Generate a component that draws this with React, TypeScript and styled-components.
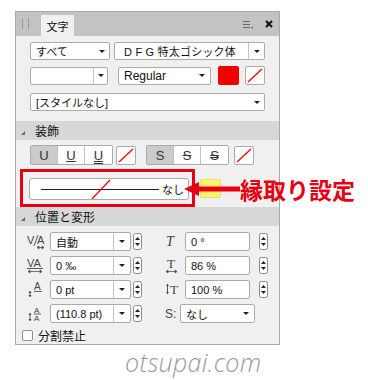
import styled, { createGlobalStyle } from 'styled-components';

const GlobalStyle = createGlobalStyle`
  body {
    margin: 0;
    background: #fff;
    font-family: "Liberation Sans", "Noto Sans CJK JP", sans-serif;
    color: #111;
  }
`;

const Page = styled.div`
  position: relative;
  width: 368px;
  height: 380px;
  padding: 11px 0 0 15px;
  box-sizing: border-box;
  background: #fff;
  overflow: hidden;
`;

const Panel = styled.div`
  width: 265px;
  height: 334px;
  box-sizing: border-box;
  border: 1px solid #a9a9a9;
  background: #f0f0f0;
  display: flex;
  flex-direction: column;
`;

const TitleBar = styled.div`
  height: 24px;
  flex-shrink: 0;
  background: #c3c3c3;
  display: flex;
  align-items: flex-end;
  padding: 0 6px 0 3px;
`;

const Grip = styled.div`
  width: 5px;
  height: 11px;
  margin: 0 10px 7px 3px;
  border-left: 1px solid #9a9a9a;
  border-right: 1px solid #9a9a9a;
`;

const Tab = styled.div`
  width: 33px;
  height: 21px;
  margin-left: 2px;
  background: #f0f0f0;
  font-size: 11px;
  display: flex;
  align-items: center;
  justify-content: center;
`;

const TitleTools = styled.div`
  margin-left: auto;
  height: 24px;
  display: flex;
  align-items: center;
  gap: 12px;
`;

const Section = styled.div<{ $pad?: string }>`
  display: flex;
  flex-direction: column;
  padding: ${(p) => p.$pad || '0 14px'};
`;

const Row = styled.div<{ $gap?: number; $mt?: number }>`
  display: flex;
  align-items: center;
  gap: ${(p) => p.$gap ?? 0}px;
  margin-top: ${(p) => p.$mt ?? 0}px;
`;

const Combo = styled.div<{ $w?: number; $h?: number }>`
  width: ${(p) => (p.$w ? `${p.$w}px` : '100%')};
  height: ${(p) => p.$h ?? 18}px;
  box-sizing: border-box;
  background: #fff;
  border: 1px solid #ababab;
  border-radius: 2px;
  display: flex;
  align-items: center;
  font-size: 11px;
  padding-left: 5px;
  flex-shrink: 0;
`;

const ComboText = styled.span`
  flex: 1;
  white-space: nowrap;
  overflow: hidden;
`;

const ArrowZone = styled.span<{ $sep?: boolean; $w?: number }>`
  width: ${(p) => p.$w ?? 14}px;
  align-self: stretch;
  display: flex;
  align-items: center;
  justify-content: center;
  border-left: ${(p) => (p.$sep ? '1px solid #c4c4c4' : 'none')};
  &::after {
    content: '';
    border-left: 3px solid transparent;
    border-right: 3px solid transparent;
    border-top: 3px solid #222;
  }
`;

const Swatch = styled.div<{ $color?: string; $w?: number; $h?: number }>`
  width: ${(p) => p.$w ?? 21}px;
  height: ${(p) => p.$h ?? 19}px;
  box-sizing: border-box;
  border-radius: 2px;
  background: ${(p) => p.$color || '#fff'};
  border: 1px solid ${(p) => (p.$color ? p.$color : '#ababab')};
  flex-shrink: 0;
  overflow: hidden;
`;

const SectionHead = styled.div<{ $mt?: number }>`
  height: 20px;
  margin-top: ${(p) => p.$mt ?? 0}px;
  background: #d7d7d7;
  display: flex;
  align-items: center;
  padding-left: 5px;
  font-size: 12px;
  gap: 10px;
`;

const Caret = styled.span`
  width: 0;
  height: 0;
  border-left: 4px solid transparent;
  border-bottom: 4px solid #6a6a6a;
  margin-top: 4px;
`;

const ToggleGroup = styled.div<{ $ml?: number }>`
  display: flex;
  margin-left: ${(p) => p.$ml ?? 0}px;
  border: 1px solid #ababab;
  border-radius: 2px;
  overflow: hidden;
`;

const Toggle = styled.div<{ $on?: boolean }>`
  width: 27px;
  height: 18px;
  box-sizing: border-box;
  background: ${(p) => (p.$on ? '#cbcbcb' : '#fff')};
  border-right: 1px solid #c2c2c2;
  display: flex;
  align-items: center;
  justify-content: center;
  font-size: 13px;
  color: #333;
  &:last-child {
    border-right: none;
  }
`;

const StrokeBox = styled.div`
  width: 175px;
  height: 38px;
  box-sizing: border-box;
  border: 3px solid #e60012;
  margin-left: 4px;
  padding: 6px 0 0 6px;
`;

const StrokeField = styled.div`
  width: 160px;
  height: 22px;
  box-sizing: border-box;
  background: #fff;
  border: 1px solid #ababab;
  border-radius: 3px;
  display: flex;
  align-items: center;
  padding: 0 4px 0 11px;
  gap: 3px;
  font-size: 11px;
  white-space: nowrap;
`;

const PosRow = styled.div<{ $mt?: number }>`
  display: flex;
  align-items: center;
  height: 19px;
  margin-top: ${(p) => p.$mt ?? 5}px;
  padding-left: 10px;
`;

const PosIcon = styled.div<{ $w: number; $ml?: number }>`
  width: ${(p) => p.$w}px;
  margin-left: ${(p) => p.$ml ?? 0}px;
  height: 19px;
  display: flex;
  align-items: center;
  flex-shrink: 0;
  font-size: 12px;
  color: #444;
`;

const Field = styled.div<{ $w: number }>`
  width: ${(p) => p.$w}px;
  height: 19px;
  box-sizing: border-box;
  background: #fff;
  border: 1px solid #ababab;
  border-radius: 2px;
  display: flex;
  align-items: center;
  padding-left: 5px;
  font-size: 11px;
  flex-shrink: 0;
`;

const SpinWrap = styled.div<{ $ml: number }>`
  margin-left: ${(p) => p.$ml}px;
  display: flex;
  align-items: center;
`;

const CheckRow = styled.div`
  display: flex;
  align-items: center;
  gap: 5px;
  margin-top: 4px;
  padding-left: 6px;
  font-size: 12px;
`;

const CheckBox = styled.span`
  width: 11px;
  height: 11px;
  box-sizing: border-box;
  background: #fff;
  border: 1px solid #8e8e8e;
  border-radius: 2px;
`;

const Watermark = styled.div`
  margin: 4px 0 0 110px;
  font-family: "Open Sans", "DejaVu Sans", sans-serif;
  font-style: italic;
  font-weight: 300;
  font-size: 25px;
  line-height: 26px;
  color: #9a9a9a;
  letter-spacing: 0.3px;
`;

const Callout = styled.div`
  position: absolute;
  left: 184px;
  top: 176px;
  display: flex;
  align-items: center;
`;

const CalloutText = styled.span`
  font-family: "Noto Sans CJK JP", sans-serif;
  font-weight: 700;
  font-size: 23px;
  line-height: 26px;
  color: #e60012;
  margin-left: 0;
`;

const Slash = ({ w, h }: { w: number; h: number }) => (
  <svg width={w} height={h} style={{ display: 'block' }}>
    <line x1={2} y1={h - 2} x2={w - 2} y2={2} stroke="#f00" strokeWidth={1.3} />
  </svg>
);

const Spinner = () => (
  <svg width="9" height="17" style={{ display: 'block' }}>
    <rect x="0.5" y="0.5" width="8" height="16" rx="2" fill="#fff" stroke="#8a8a8a" />
    <path d="M2 7 L4.5 4 L7 7 Z" fill="#222" />
    <path d="M2 10 L4.5 13 L7 10 Z" fill="#222" />
  </svg>
);

const SmallArrow = ({ x, y, w }: { x: number; y: number; w: number }) => (
  <g stroke="#555" strokeWidth={0.8} fill="#555">
    <line x1={x} y1={y} x2={x + w} y2={y} />
    <path d={`M${x} ${y} l2 -1.5 v3 z M${x + w} ${y} l-2 -1.5 v3 z`} />
  </g>
);

const KernIcon = () => (
  <svg width="20" height="17">
    <text x="1" y="11" fontSize="11" fontFamily="Liberation Sans" fill="#444">V</text>
    <text x="11" y="11" fontSize="11" fontFamily="Liberation Sans" fill="#444">A</text>
    <line x1="8" y1="13" x2="12" y2="2" stroke="#444" strokeWidth={0.9} />
    <SmallArrow x={11} y={14.5} w={7} />
  </svg>
);

const TrackIcon = () => (
  <svg width="20" height="17">
    <text x="1" y="10" fontSize="11" fontFamily="Liberation Sans" fill="#444">VA</text>
    <line x1="1" y1="11.5" x2="17" y2="11.5" stroke="#444" strokeWidth={0.9} />
    <SmallArrow x={2} y={14.5} w={14} />
  </svg>
);

const ShiftIcon = () => (
  <svg width="20" height="17">
    <text x="8" y="9" fontSize="10" fontFamily="Liberation Sans" fill="#444">A</text>
    <line x1="8" y1="10.5" x2="16" y2="10.5" stroke="#444" strokeWidth={0.8} />
    <line x1="4" y1="10" x2="4" y2="16" stroke="#444" strokeWidth={0.8} />
    <path d="M4 10 l-1.5 2 h3 z M4 16 l-1.5 -2 h3 z" fill="#444" />
  </svg>
);

const LeadIcon = () => (
  <svg width="20" height="17">
    <text x="8" y="8" fontSize="8" fontFamily="Liberation Sans" fill="#444">A</text>
    <line x1="8" y1="9" x2="15" y2="9" stroke="#444" strokeWidth={0.8} />
    <text x="8" y="16" fontSize="8" fontFamily="Liberation Sans" fill="#444">A</text>
    <line x1="4" y1="8" x2="4" y2="16" stroke="#444" strokeWidth={0.8} />
    <path d="M4 8 l-1.5 2 h3 z M4 16 l-1.5 -2 h3 z" fill="#444" />
  </svg>
);

const SkewIcon = () => (
  <svg width="16" height="17">
    <text x="1" y="13" fontSize="14" fontFamily="Liberation Serif" fontStyle="italic" fill="#444">T</text>
  </svg>
);

const HScaleIcon = () => (
  <svg width="16" height="17">
    <text x="2" y="11" fontSize="13" fontFamily="Liberation Serif" fill="#444">T</text>
    <SmallArrow x={1} y={14.5} w={11} />
  </svg>
);

const VScaleIcon = () => (
  <svg width="18" height="17">
    <line x1="2.5" y1="3" x2="2.5" y2="13" stroke="#444" strokeWidth={0.9} />
    <path d="M2.5 3 l-1.5 2 h3 z M2.5 13 l-1.5 -2 h3 z" fill="#444" />
    <text x="5" y="13" fontSize="13" fontFamily="Liberation Serif" fill="#444">T</text>
  </svg>
);

const MenuIcon = () => (
  <svg width="10" height="9">
    <g stroke="#666" strokeWidth={1}>
      <line x1="0" y1="1.5" x2="7" y2="1.5" />
      <line x1="0" y1="4.5" x2="7" y2="4.5" />
      <line x1="0" y1="7.5" x2="7" y2="7.5" />
    </g>
    <rect x="8.5" y="7" width="1.5" height="1.5" fill="#666" />
  </svg>
);

const CloseIcon = () => (
  <svg width="8" height="8">
    <g stroke="#111" strokeWidth={2}>
      <line x1="1" y1="1" x2="7" y2="7" />
      <line x1="7" y1="1" x2="1" y2="7" />
    </g>
  </svg>
);

const CalloutArrow = () => (
  <svg width="56" height="16">
    <path d="M0 8 L15 1 L15 5.5 L56 5.5 L56 10.5 L15 10.5 L15 15 Z" fill="#e60012" />
  </svg>
);

const positionRows = [
  { left: <KernIcon />, value: '自動', right: <SkewIcon />, rvalue: '0 °' },
  { left: <TrackIcon />, value: '0 ‰', right: <HScaleIcon />, rvalue: '86 %' },
  { left: <ShiftIcon />, value: '0 pt', right: <VScaleIcon />, rvalue: '100 %' },
];

export default function App() {
  return (
    <>
      <GlobalStyle />
      <Page>
        <Panel>
          <TitleBar>
            <Grip />
            <Tab>文字</Tab>
            <TitleTools>
              <MenuIcon />
              <CloseIcon />
            </TitleTools>
          </TitleBar>

          <Section $pad="6px 14px 0">
            <Row $gap={4}>
              <Combo $w={80}>
                <ComboText>すべて</ComboText>
                <ArrowZone $w={15} />
              </Combo>
              <Combo $w={151} style={{ paddingLeft: 9 }}>
                <ComboText style={{ letterSpacing: 0.2 }}>D F G 特太ゴシック体</ComboText>
                <ArrowZone $sep $w={15} />
              </Combo>
            </Row>
            <Row $mt={6}>
              <Combo $w={78}>
                <ComboText />
                <ArrowZone $sep $w={13} />
              </Combo>
              <Combo $w={93} style={{ marginLeft: 10 }}>
                <ComboText style={{ fontSize: 12 }}>Regular</ComboText>
                <ArrowZone $w={16} />
              </Combo>
              <Swatch $color="#f20000" style={{ marginLeft: 7 }} />
              <Swatch $w={20} style={{ marginLeft: 6 }}>
                <Slash w={18} h={17} />
              </Swatch>
            </Row>
            <Row $mt={8}>
              <Combo>
                <ComboText>[スタイルなし]</ComboText>
                <ArrowZone $w={15} />
              </Combo>
            </Row>
          </Section>

          <SectionHead $mt={10}>
            <Caret />
            装飾
          </SectionHead>

          <Section $pad="5px 14px 0">
            <Row>
              <ToggleGroup>
                <Toggle $on>U</Toggle>
                <Toggle style={{ textDecoration: 'underline' }}>U</Toggle>
                <Toggle style={{ textDecoration: 'underline double' }}>U</Toggle>
              </ToggleGroup>
              <Swatch $w={20} style={{ marginLeft: 3 }}>
                <Slash w={18} h={17} />
              </Swatch>
              <ToggleGroup $ml={10}>
                <Toggle $on>S</Toggle>
                <Toggle style={{ textDecoration: 'line-through' }}>S</Toggle>
                <Toggle style={{ textDecoration: 'line-through double' }}>S</Toggle>
              </ToggleGroup>
              <Swatch $w={20} style={{ marginLeft: 5 }}>
                <Slash w={18} h={17} />
              </Swatch>
            </Row>
          </Section>

          <Row $mt={4}>
            <StrokeBox>
              <StrokeField>
                <svg width="118" height="20" style={{ display: 'block', flexShrink: 0 }}>
                  <line x1="0" y1="10.5" x2="118" y2="10.5" stroke="#222" strokeWidth={1} />
                  <line x1="51" y1="20" x2="69" y2="1" stroke="#f00" strokeWidth={1.3} />
                </svg>
                なし
              </StrokeField>
            </StrokeBox>
            <Swatch $color="#fff36b" $h={19} style={{ marginLeft: 5, borderColor: '#e8df70' }} />
          </Row>

          <SectionHead $mt={0}>
            <Caret />
            位置と変形
          </SectionHead>

          {positionRows.map((r, i) => (
            <PosRow key={`pos-${i}`} $mt={i === 0 ? 6 : 5}>
              <PosIcon $w={24}>{r.left}</PosIcon>
              <Combo $w={81} $h={19}>
                <ComboText>{r.value}</ComboText>
                <ArrowZone $sep $w={16} />
              </Combo>
              <SpinWrap $ml={2}>
                <Spinner />
              </SpinWrap>
              <PosIcon $w={20} $ml={23}>
                {r.right}
              </PosIcon>
              <Field $w={65}>{r.rvalue}</Field>
              <SpinWrap $ml={9}>
                <Spinner />
              </SpinWrap>
            </PosRow>
          ))}
          <PosRow>
            <PosIcon $w={24}>
              <LeadIcon />
            </PosIcon>
            <Combo $w={81} $h={19}>
              <ComboText>(110.8 pt)</ComboText>
              <ArrowZone $sep $w={16} />
            </Combo>
            <SpinWrap $ml={2}>
              <Spinner />
            </SpinWrap>
            <PosIcon $w={15} $ml={23}>
              S:
            </PosIcon>
            <Combo $w={75} $h={19}>
              <ComboText>なし</ComboText>
              <ArrowZone $w={16} />
            </Combo>
          </PosRow>

          <CheckRow>
            <CheckBox />
            分割禁止
          </CheckRow>
        </Panel>

        <Watermark>otsupai.com</Watermark>

        <Callout>
          <CalloutArrow />
          <CalloutText>縁取り設定</CalloutText>
        </Callout>
      </Page>
    </>
  );
}
